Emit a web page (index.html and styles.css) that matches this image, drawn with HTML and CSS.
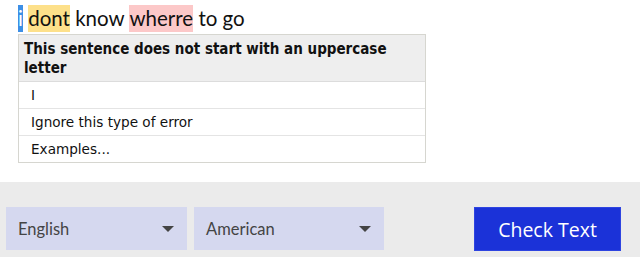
FILE: index.html
```html
<!DOCTYPE html>
<html>
<head>
<meta charset="utf-8">
<link rel="stylesheet" href="styles.css">
</head>
<body>
<div class="editor">
  <div class="line"><span class="hl hl-sel">i</span> <span class="hl hl-style">dont</span> know <span class="hl hl-spell">wherre</span> to go</div>
  <div class="popup">
    <div class="popup-head">This sentence does not start with an uppercase letter</div>
    <div class="popup-item">I</div>
    <div class="popup-item">Ignore this type of error</div>
    <div class="popup-item">Examples...</div>
  </div>
</div>
<div class="toolbar">
  <div class="select select-lang"><span>English</span><span class="caret"></span></div>
  <div class="select select-var"><span>American</span><span class="caret"></span></div>
  <div class="spacer"></div>
  <button class="check">Check Text</button>
</div>
</body>
</html>
```
FILE: styles.css
```css
html, body {
  margin: 0;
  padding: 0;
  background: #ffffff;
}
body {
  width: 640px;
  height: 257px;
  overflow: hidden;
}
.editor {
  position: relative;
  height: 182px;
  box-sizing: border-box;
  padding: 5px 0 0 18px;
}
.line {
  font-family: "Lato", "Open Sans", sans-serif;
  font-size: 20.5px;
  line-height: 27px;
  color: #111;
  white-space: nowrap;
}
.hl {
  display: inline-block;
  height: 27px;
}
.hl-sel {
  background: #3d8fe6;
  color: #fff;
}
.hl-style {
  background: #fde08a;
}
.hl-spell {
  background: #fcc8c8;
}
.popup {
  position: absolute;
  left: 18px;
  top: 34px;
  width: 406px;
  border: 1px solid #d6d6d0;
  background: #fff;
  font-family: "DejaVu Sans", sans-serif;
  font-size: 13.6px;
  color: #111;
}
.popup-head {
  background: #eeeeee;
  font-family: "DejaVu Sans Condensed", "DejaVu Sans", sans-serif;
  font-weight: bold;
  font-size: 15px;
  line-height: 19px;
  padding: 5px 6px 3px 5px;
  border-bottom: 1px solid #dcdcdc;
}
.popup-item {
  height: 26px;
  line-height: 26px;
  padding-left: 12px;
  border-bottom: 1px solid #e4e4e4;
}
.popup-item:last-child {
  border-bottom: none;
}
.toolbar {
  height: 75px;
  background: #ebebeb;
  box-sizing: border-box;
  padding: 25px 19px 0 6px;
  display: flex;
  align-items: flex-start;
  gap: 7px;
}
.select {
  height: 43px;
  background: #d5d8ef;
  display: flex;
  align-items: center;
  justify-content: space-between;
  box-sizing: border-box;
  padding: 0 13px 0 12px;
  font-family: "Lato", "Open Sans", sans-serif;
  font-size: 16.5px;
  color: #444;
}
.select-lang { width: 181px; }
.select-var { width: 190px; }
.caret {
  width: 0;
  height: 0;
  border-left: 6px solid transparent;
  border-right: 6px solid transparent;
  border-top: 6px solid #444;
}
.spacer { flex: 1; }
.check {
  width: 147px;
  height: 44px;
  background: #1b32d8;
  color: #fff;
  border: 1px solid #2e44e0;
  font-family: "Open Sans", sans-serif;
  font-size: 19.5px;
  padding: 0;
}
```
